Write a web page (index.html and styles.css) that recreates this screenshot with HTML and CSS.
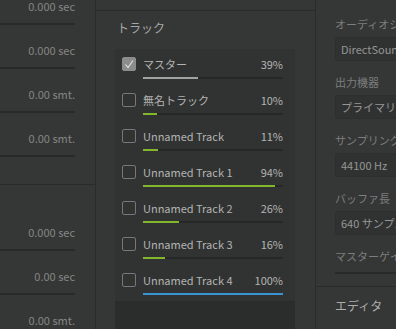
FILE: index.html
```html
<!DOCTYPE html>
<html lang="ja">
<head>
  <meta charset="UTF-8" />
  <title>オーディオ設定</title>
  <link rel="stylesheet" href="styles.css">
</head>
<body>
  <div class="left">
    <div class="left-group first">
      <div class="value-row"><span class="value">0.000 sec</span><div class="line"></div></div>
      <div class="value-row"><span class="value">0.000 sec</span><div class="line"></div></div>
      <div class="value-row"><span class="value">0.00 smt.</span><div class="line"></div></div>
      <div class="value-row"><span class="value">0.00 smt.</span><div class="line"></div></div>
    </div>
    <div class="left-group second">
      <div class="value-row"><span class="value">0.000 sec</span><div class="line"></div></div>
      <div class="value-row"><span class="value">0.00 sec</span><div class="line"></div></div>
      <div class="value-row"><span class="value">0.00 smt.</span><div class="line"></div></div>
    </div>
  </div>

  <div class="middle">
    <div class="mid-top"></div>
    <h3 class="section-title">トラック</h3>
    <div class="track-box">
      <div class="track-list">
        <div class="track">
          <div class="track-head">
            <span class="check checked">
              <svg width="12" height="12" viewBox="0 0 12 12"><polyline points="2.5,6.5 5,9.5 10,2.5" fill="none" stroke="#e2e2e2" stroke-width="1.1"/></svg>
            </span>
            <span class="name">マスター</span>
            <span class="pct">39%</span>
          </div>
          <div class="bar"><div class="fill grey" style="width: 39%"></div></div>
        </div>
        <div class="track">
          <div class="track-head"><span class="check"></span><span class="name">無名トラック</span><span class="pct">10%</span></div>
          <div class="bar"><div class="fill green" style="width: 10%"></div></div>
        </div>
        <div class="track">
          <div class="track-head"><span class="check"></span><span class="name">Unnamed Track</span><span class="pct">11%</span></div>
          <div class="bar"><div class="fill green" style="width: 11%"></div></div>
        </div>
        <div class="track">
          <div class="track-head"><span class="check"></span><span class="name">Unnamed Track 1</span><span class="pct">94%</span></div>
          <div class="bar"><div class="fill green" style="width: 94%"></div></div>
        </div>
        <div class="track">
          <div class="track-head"><span class="check"></span><span class="name">Unnamed Track 2</span><span class="pct">26%</span></div>
          <div class="bar"><div class="fill green" style="width: 26%"></div></div>
        </div>
        <div class="track">
          <div class="track-head"><span class="check"></span><span class="name">Unnamed Track 3</span><span class="pct">16%</span></div>
          <div class="bar"><div class="fill green" style="width: 16%"></div></div>
        </div>
        <div class="track">
          <div class="track-head"><span class="check"></span><span class="name">Unnamed Track 4</span><span class="pct">100%</span></div>
          <div class="bar"><div class="fill blue" style="width: 100%"></div></div>
        </div>
      </div>
    </div>
  </div>

  <div class="right">
    <div class="right-group">
      <div class="field">
        <label>オーディオシステム</label>
        <div class="select">DirectSound</div>
      </div>
      <div class="field">
        <label>出力機器</label>
        <div class="select">プライマリ サウンド ドライバー</div>
      </div>
      <div class="field">
        <label>サンプリングレート</label>
        <div class="select">44100 Hz</div>
      </div>
      <div class="field">
        <label>バッファ長</label>
        <div class="select">640 サンプル</div>
      </div>
      <div class="field">
        <label>マスターゲイン</label>
        <div class="slider"></div>
      </div>
    </div>
    <div class="right-group editor">
      <h3 class="editor-title">エディタ</h3>
    </div>
  </div>
</body>
</html>
```

FILE: styles.css
```css
body {
  margin: 0;
  width: 396px;
  height: 329px;
  overflow: hidden;
  display: flex;
  background: #353736;
  font-family: "Noto Sans CJK JP", "Noto Sans", sans-serif;
  font-size: 11px;
  color: #b3b3b3;
}

/* left column */
.left {
  width: 95px;
  flex-shrink: 0;
  border-right: 1px solid #2a2b2b;
}

.left-group.first {
  margin-top: -2px;
  padding-bottom: 10px;
}

.left-group.second {
  border-top: 1px solid #2a2b2b;
  padding-top: 39px;
}

.value-row {
  height: 44px;
  box-sizing: border-box;
  padding-right: 20px;
  display: flex;
  flex-direction: column;
  align-items: flex-end;
}

.value {
  line-height: 16px;
  color: #858585;
}

.line {
  width: 100%;
  height: 2px;
  margin-top: 9px;
  background: #29292a;
}

/* middle column */
.middle {
  width: 219px;
  flex-shrink: 0;
  border-right: 1px solid #2a2b2b;
  display: flex;
  flex-direction: column;
}

.mid-top {
  height: 10px;
  border-bottom: 1px solid #2a2b2b;
}

.section-title {
  margin: 9px 0 13px 21px;
  font-size: 12px;
  font-weight: normal;
  line-height: 16px;
  color: #a6a6a6;
}

.track-box {
  flex: 1;
  margin: 0 20px 0 19px;
  background: #2b2c2c;
}

.track-list {
  background: #313332;
  padding: 0 12px 0 7px;
}

.track {
  padding-top: 7px;
  padding-bottom: 6px;
}

.track-head {
  display: flex;
  align-items: center;
  height: 16px;
}

.check {
  width: 12px;
  height: 12px;
  border: 1px solid #777;
  border-radius: 2px;
  margin-right: 7px;
  display: flex;
  align-items: center;
  justify-content: center;
}

.check.checked {
  background: #8c8c8c;
  border-color: #8c8c8c;
}

.name {
  flex: 1;
  line-height: 16px;
}

.pct {
  line-height: 16px;
}

.bar {
  margin: 5px 0 0 21px;
  height: 2px;
  background: #262727;
}

.fill {
  height: 100%;
}

.fill.grey {
  background: #a2a2a2;
}

.fill.green {
  background: #84b62c;
}

.fill.blue {
  background: #3a93d3;
}

/* right column */
.right {
  flex: 1;
  min-width: 0;
}

.right-group {
  padding: 16px 0 0 19px;
  height: 286px;
  box-sizing: border-box;
}

.field {
  height: 58px;
  white-space: nowrap;
}

.field label {
  display: block;
  line-height: 16px;
  color: #7d7d7d;
}

.select {
  margin-top: 5px;
  width: 200px;
  height: 24px;
  box-sizing: border-box;
  padding-left: 5px;
  line-height: 22px;
  background: #303231;
  border: 1px solid #2d2e2e;
  border-radius: 2px;
  color: #969696;
}

.slider {
  margin-top: 8px;
  width: 200px;
  height: 2px;
  background: #29292a;
}

.right-group.editor {
  height: auto;
  border-top: 1px solid #2a2b2b;
  padding-top: 11px;
}

.editor-title {
  margin: 0;
  font-size: 12px;
  font-weight: normal;
  line-height: 16px;
  color: #acacac;
}
```
